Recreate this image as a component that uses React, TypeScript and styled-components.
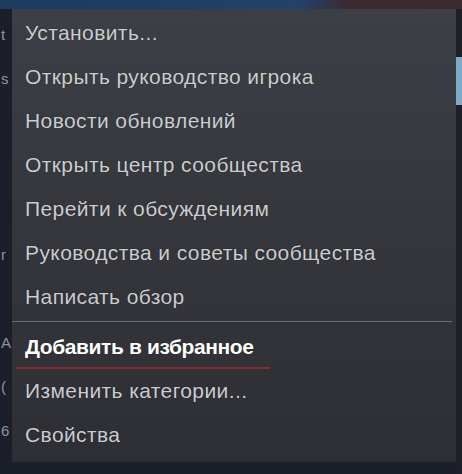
import React from "react";
import styled, { createGlobalStyle, css } from "styled-components";

const GlobalStyle = createGlobalStyle`
  html, body {
    margin: 0;
    padding: 0;
    background: #1b2029;
  }
  body {
    font-family: 'Liberation Sans', Arial, sans-serif;
  }
`

const Screen = styled.div`
  position: relative;
  width: 462px;
  height: 474px;
  overflow: hidden;
  background: #1a1f29;
`

// the app behind the menu
const TopBar = styled.div`
  height: 9px;
  background: linear-gradient(90deg, #1d3a5f 0%, #22426a 65%, #3a2b33 75%, #3b2a30 100%);
`

const SideColumn = styled.div`
  position: absolute;
  top: 9px;
  left: 0;
  width: 12px;
  display: grid;
  grid-template-rows: repeat(10, 44px);
  padding-top: 16px;
  color: #b9bcc2;
  font-size: 15px;
  line-height: 20px;
`

const SideGlyph = styled.span`
  display: block;
  padding-left: 1px;
  opacity: .75;
`

const RightEdge = styled.div`
  position: absolute;
  top: 9px;
  right: 0;
  width: 6px;
  bottom: 0;
  background: #1d2029;
  display: flex;
  flex-direction: column;
  padding-top: 48px;
`

const BlueTab = styled.div`
  height: 48px;
  background: #7eaac8;
`

// context menu
const Menu = styled.div`
  position: absolute;
  top: 9px;
  left: 12px;
  width: 444px;
  height: 453px;
  padding-top: 2px;
  box-sizing: border-box;
  background: linear-gradient(180deg, #3d3f46 0%, #35373d 45%, #2d2f34 100%);
  display: flex;
  flex-direction: column;
`

const Item = styled.div<{ $active?: boolean }>`
  position: relative;
  height: 44px;
  display: flex;
  align-items: center;
  padding-left: 13px;
  font-size: 21px;
  color: #cbcdd0;
  letter-spacing: 0.4px;
  white-space: nowrap;
  text-shadow: 0 0 1px rgba(0, 0, 0, .5);

  ${({ $active }) => $active && css`
    color: #ffffff;
    font-weight: 700;
    letter-spacing: -0.4px;

    &::after {
      content: '';
      position: absolute;
      left: 4px;
      bottom: 0;
      width: 254px;
      height: 2px;
      background: #8b2a36;
    }
  `}
`

const Separator = styled.div`
  height: 1px;
  margin: 2px 4px 3px 0;
  background: #6b6e74;
`

const topItems = [
  "Установить...",
  "Открыть руководство игрока",
  "Новости обновлений",
  "Открыть центр сообщества",
  "Перейти к обсуждениям",
  "Руководства и советы сообщества",
  "Написать обзор",
]

const bottomItems = [
  { label: "Добавить в избранное", active: true },
  { label: "Изменить категории..." },
  { label: "Свойства" },
]

const sideGlyphs = ["t", "s", "", "", "", "r", "", "A", "(", "6"]

export default function App() {
  return (
    <Screen>
      <GlobalStyle />
      <TopBar />
      <SideColumn>
        {sideGlyphs.map((g, i) => <SideGlyph key={i}>{g}</SideGlyph>)}
      </SideColumn>
      <RightEdge>
        <BlueTab />
      </RightEdge>
      <Menu>
        {topItems.map((t) => <Item key={t}>{t}</Item>)}
        <Separator />
        {bottomItems.map((it) => (
          <Item key={it.label} $active={it.active}>{it.label}</Item>
        ))}
      </Menu>
    </Screen>
  );
}
